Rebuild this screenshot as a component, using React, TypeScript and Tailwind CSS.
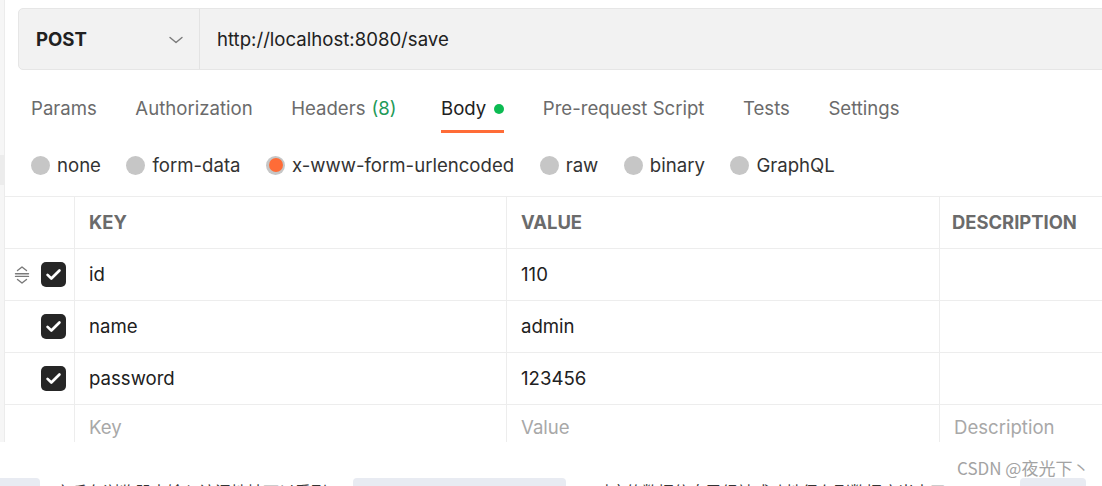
import React from "react";

const tabs = [
  { label: "Params" },
  { label: "Authorization" },
  { label: "Headers", count: "(8)" },
  { label: "Body", active: true },
  { label: "Pre-request Script" },
  { label: "Tests" },
  { label: "Settings" },
];

const radios = [
  { label: "none" },
  { label: "form-data" },
  { label: "x-www-form-urlencoded", selected: true },
  { label: "raw" },
  { label: "binary" },
  { label: "GraphQL" },
];

const rows = [
  { key: "id", value: "110", handle: true },
  { key: "name", value: "admin" },
  { key: "password", value: "123456" },
];

function Check() {
  return (
    <div className="w-[25px] h-[25px] rounded-[5px] bg-[#262626] flex items-center justify-center">
      <svg width="19" height="19" viewBox="0 0 24 24" fill="none">
        <path d="M4.5 12.5l4.8 4.6L19.5 7" stroke="#fff" strokeWidth="3.4" strokeLinecap="round" strokeLinejoin="round" />
      </svg>
    </div>
  );
}

function Handle() {
  return (
    <svg width="18" height="20" viewBox="0 0 18 20" fill="none" stroke="#7a7a7a" strokeWidth="1.4" strokeLinecap="round" strokeLinejoin="round">
      <path d="M4.5 5.5L9 2l4.5 3.5" />
      <path d="M2.5 8.8H15.5" />
      <path d="M2.5 11.4H15.5" />
      <path d="M4.5 14.5L9 18l4.5-3.5" />
    </svg>
  );
}

export default function App() {
  return (
    <div className="relative w-[1102px] h-[486px] overflow-hidden bg-white font-['Inter','Noto_Sans',sans-serif]">
      <div className="flex h-[478px]">
        {/* left strip */}
        <div className="w-[5px] h-[442px] flex flex-col bg-[#f6f6f6] border-r border-[#ececec]">
          <div className="h-[155px]" />
          <div className="h-[30px] bg-[#ececec]" />
        </div>
        {/* main */}
        <div className="flex-1 flex flex-col min-w-0">
          {/* url bar */}
          <div className="mt-[8px] ml-[13px] -mr-[10px] h-[62px] flex bg-[#f2f2f2] border border-[#e6e6e6] rounded-l-[5px]">
            <div className="w-[181px] shrink-0 flex items-center justify-between pl-[17px] pr-[15px] pt-[2px] border-r border-[#e3e3e3]">
              <span className="text-[18.6px] font-bold text-[#212121]">POST</span>
              <svg width="16" height="10" viewBox="0 0 16 10" fill="none">
                <path d="M2 2.5l6 5 6-5" stroke="#7a7a7a" strokeWidth="1.4" strokeLinecap="round" strokeLinejoin="round" />
              </svg>
            </div>
            <div className="flex items-center pl-[17px] pt-[1px] text-[18.6px] text-[#212121]">http://localhost:8080/save</div>
          </div>
          {/* tabs */}
          <div className="flex pl-[26px] gap-[38.5px] pt-[27px]">
            {tabs.map((t) => (
              <div key={t.label} className={"flex flex-col " + (t.count ? "mr-[6px]" : "")}>
                <div className={"h-[24px] flex items-center text-[18.6px] whitespace-nowrap " + (t.active ? "text-[#212121]" : "text-[#6b6b6b]")}>
                  {t.label}
                  {t.count && <span className="ml-[6px] text-[#1f9a59]">{t.count}</span>}
                  {t.active && <span className="ml-[8px] w-[10px] h-[10px] rounded-full bg-[#0cbb52]" />}
                </div>
                <div className={"mt-[9px] h-[3px] " + (t.active ? "bg-[#ff6c37]" : "bg-transparent")} />
              </div>
            ))}
          </div>
          {/* radios */}
          <div className="h-[64px] flex items-center pl-[26px] gap-[25.5px] pt-[1px]">
            {radios.map((r) => (
              <div key={r.label} className="flex items-center gap-[7px]">
                {r.selected ? (
                  <div className="w-[19px] h-[19px] rounded-full bg-[#c6c6c6] flex items-center justify-center">
                    <div className="w-[14px] h-[14px] rounded-full bg-[#ff6c37]" />
                  </div>
                ) : (
                  <div className="w-[19px] h-[19px] rounded-full bg-[#c6c6c6]" />
                )}
                <span className="text-[18.6px] text-[#333333] whitespace-nowrap">{r.label}</span>
              </div>
            ))}
          </div>
          {/* table */}
          <div className="h-[246px] overflow-hidden border-t border-[#ededed] -mt-[1px]">
            <div className="flex h-[52px] border-b border-[#ededed]">
              <div className="w-[70px] shrink-0 border-r border-[#ededed]" />
              <div className="w-[432px] shrink-0 border-r border-[#ededed] flex items-center pl-[14px] text-[18.4px] font-bold text-[#6b6b6b]">KEY</div>
              <div className="w-[433px] shrink-0 border-r border-[#ededed] flex items-center pl-[14px] text-[18.4px] font-bold text-[#6b6b6b]">VALUE</div>
              <div className="flex-1 flex items-center pl-[12px] text-[18.4px] font-bold text-[#6b6b6b]">DESCRIPTION</div>
            </div>
            {rows.map((r) => (
              <div key={r.key} className="flex h-[52px] border-b border-[#ededed]">
                <div className="w-[70px] shrink-0 border-r border-[#ededed] flex items-center justify-end gap-[10px] pr-[8px]">
                  {r.handle && <Handle />}
                  <Check />
                </div>
                <div className="w-[432px] shrink-0 border-r border-[#ededed] flex items-center pl-[14px] text-[18.6px] text-[#212121]">{r.key}</div>
                <div className="w-[433px] shrink-0 border-r border-[#ededed] flex items-center pl-[14px] text-[18.6px] text-[#212121]">{r.value}</div>
                <div className="flex-1" />
              </div>
            ))}
            <div className="flex h-[46px]">
              <div className="w-[70px] shrink-0 border-r border-[#ededed]" />
              <div className="w-[432px] shrink-0 border-r border-[#ededed] flex items-center pl-[14px] text-[18.6px] text-[#a8a8a8]">Key</div>
              <div className="w-[433px] shrink-0 border-r border-[#ededed] flex items-center pl-[14px] text-[18.6px] text-[#a8a8a8]">Value</div>
              <div className="flex-1 flex items-center pl-[14px] text-[18.6px] text-[#a8a8a8]">Description</div>
            </div>
          </div>
        </div>
      </div>
      {/* cut-off bottom line */}
      <div className="h-[8px] overflow-hidden flex items-start font-['Noto_Sans_CJK_SC',sans-serif] text-[16px] leading-[20px] text-[#333]">
        <div className="w-[40px] h-[20px] shrink-0 bg-[#e8ebf2] rounded-tr-[4px]" />
        <div className="w-[313px] shrink-0 pl-[15px] pt-[3px] whitespace-nowrap overflow-hidden">之后在浏览器中输入访问地址可以看到</div>
        <div className="w-[213px] h-[20px] shrink-0 bg-[#e8ebf2] rounded-t-[4px]" />
        <div className="w-[454px] shrink-0 pl-[28px] pt-[3px] whitespace-nowrap overflow-hidden">对应的数据信息已经被成功地保存到数据库当中了</div>
        <div className="w-[66px] h-[20px] shrink-0 bg-[#e8ebf2] rounded-t-[4px]" />
      </div>
      {/* watermark */}
      <div className="absolute left-[957px] top-[456px] text-[17px] leading-[24px] text-[#a3a3a3] font-['Noto_Sans_CJK_SC',sans-serif] whitespace-nowrap">
        CSDN @夜光下丶
      </div>
    </div>
  );
}
